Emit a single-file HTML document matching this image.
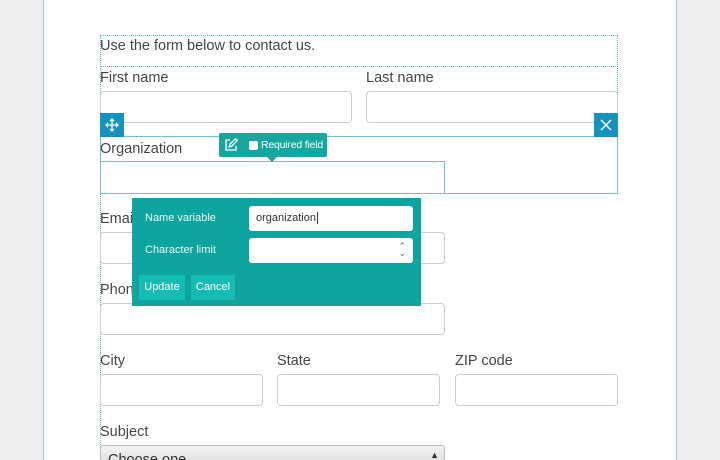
<!DOCTYPE html>
<html style="width:720px;height:460px;overflow:hidden"><head><style>
*{box-sizing:border-box;margin:0;padding:0}
body{width:720px;height:460px;overflow:hidden;background:#eee;font-family:"Liberation Sans",sans-serif;position:relative;color:#333}
.page{position:absolute;left:43px;top:0;width:634px;height:460px;background:#fff;border-left:1px solid #9cc8dc;border-right:1px solid #9cc8dc}
.a{position:absolute;white-space:nowrap}
.lbl{position:absolute;font-size:14.5px;color:#444;white-space:nowrap;margin-top:1px}
.in{position:absolute;height:32px;border:1px solid #ccc;border-radius:4px;background:#fff}
</style></head><body>
<div class="page"></div>
<div class="a" style="left:100px;top:35px;width:518px;height:32px;border:1px dotted #4cc0c8"></div>
<div class="a" style="left:100px;top:35px;width:0;height:430px;border-left:1px dotted #4cc0c8"></div>
<div class="a" style="left:617px;top:35px;width:0;height:80px;border-left:1px dotted #4cc0c8"></div>
<div class="lbl" style="left:100px;top:37px">Use the form below to contact us.</div>
<div class="lbl" style="left:100px;top:69px">First name</div>
<div class="lbl" style="left:366px;top:69px">Last name</div>
<div class="in" style="left:100px;top:91px;width:252px"></div>
<div class="in" style="left:366px;top:91px;width:252px"></div>
<div class="a" style="left:100px;top:136px;width:518px;height:58px;border:1px solid #6cc2d2;background:#fff"></div>
<div class="lbl" style="left:100px;top:140px">Organization</div>
<div class="a" style="left:100px;top:161px;width:345px;height:33px;border:1px solid #6cc2d2;background:#fff"></div>
<div class="a" style="left:100px;top:113px;width:24px;height:24px;background:#1592c0;text-align:center">
<svg width="14" height="14" viewBox="0 0 14 14" style="margin-top:5px" fill="none" stroke="#fff" stroke-width="1.3"><path d="M7 1V13M1 7H13M5 3L7 1L9 3M5 11L7 13L9 11M3 5L1 7L3 9M11 5L13 7L11 9"/></svg></div>
<div class="a" style="left:594px;top:113px;width:24px;height:24px;background:#1592c0">
<svg width="24" height="24" viewBox="0 0 24 24" stroke="#fff" stroke-width="1.5"><path d="M7 7L17 17M17 7L7 17"/></svg></div>
<div class="a" style="left:219px;top:133px;width:108px;height:24px;background:#16a6a0;border-radius:2px;color:#fff;font-size:10.5px;letter-spacing:-0.2px">
<svg class="a" style="left:5px;top:5px" width="14" height="14" viewBox="0 0 14 14" fill="none" stroke="#fff" stroke-width="1.3"><path d="M6 2H2V12H12V8M5 9L6 6L11.5 0.8L13.2 2.5L8 8Z"/></svg>
<div class="a" style="left:30px;top:8px;width:9px;height:9px;background:#fff;border-radius:2px"></div>
<span class="a" style="left:42px;top:6px">Required field</span></div>
<div class="a" style="left:267px;top:157px;width:0;height:0;border-left:5px solid transparent;border-right:5px solid transparent;border-top:5px solid #16a6a0"></div>
<div class="lbl" style="left:100px;top:210px">Email</div>
<div class="in" style="left:100px;top:232px;width:345px"></div>
<div class="lbl" style="left:100px;top:281px">Phone</div>
<div class="in" style="left:100px;top:303px;width:345px"></div>
<div class="a" style="left:132px;top:198px;width:289px;height:108px;background:#0fa59f;color:#e8f8f7;font-size:11px">
<span class="a" style="left:13px;top:14px">Name variable</span>
<span class="a" style="left:13px;top:46px">Character limit</span>
<div class="a" style="left:117px;top:8px;width:164px;height:25px;background:#fff;border-radius:3px;color:#333;font-size:11px;padding:6px 7px">organization<span style="border-left:1px solid #333;margin-left:1px"></span></div>
<div class="a" style="left:117px;top:40px;width:164px;height:25px;background:#fff;border-radius:3px;color:#666;font-size:9px;text-align:right;padding:5px 7px;line-height:7px">⌃<br>⌄</div>
<div class="a" style="left:7px;top:77px;width:46px;height:25px;background:#14bcb4;color:#fff;text-align:center;line-height:25px">Update</div>
<div class="a" style="left:59px;top:77px;width:44px;height:25px;background:#14bcb4;color:#fff;text-align:center;line-height:25px">Cancel</div>
</div>
<div class="lbl" style="left:100px;top:352px">City</div>
<div class="lbl" style="left:277px;top:352px">State</div>
<div class="lbl" style="left:455px;top:352px">ZIP code</div>
<div class="in" style="left:100px;top:374px;width:163px"></div>
<div class="in" style="left:277px;top:374px;width:163px"></div>
<div class="in" style="left:455px;top:374px;width:163px"></div>
<div class="lbl" style="left:100px;top:423px">Subject</div>
<div class="a" style="left:100px;top:445px;width:345px;height:15px;overflow:hidden;border:1px solid #bbb;border-bottom:none;border-radius:3px 3px 0 0;background:linear-gradient(#f4f4f4,#e2e2e2);font-size:14.5px;padding:6px 7px;color:#333">Choose one<span style="position:absolute;right:5px;top:4px;font-size:9px">▲</span></div>
</body></html>
